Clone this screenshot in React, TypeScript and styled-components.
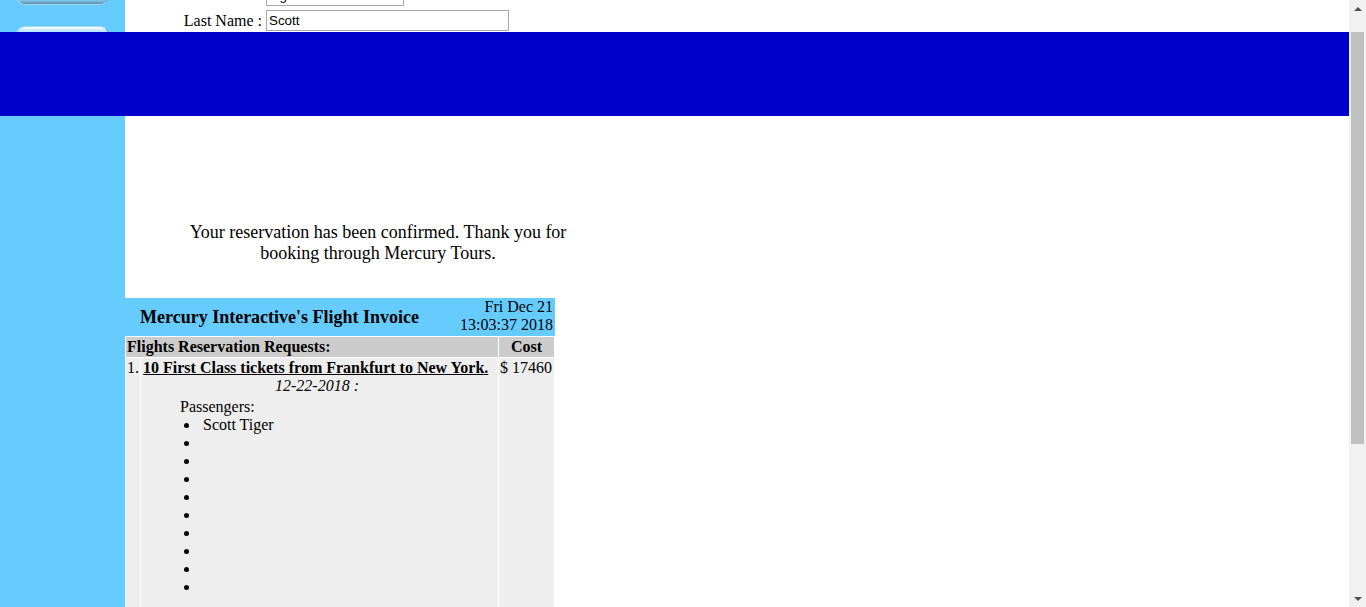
import React, { useLayoutEffect } from "react";
import styled, { createGlobalStyle } from "styled-components";

const GlobalStyle = createGlobalStyle`
  html, body { margin: 0; padding: 0; background: #ffffff; }
  body {
    font-family: "Liberation Serif", "Times New Roman", serif;
    font-size: 16px;
    color: #000000;
  }
`;

const Page = styled.div`
  display: flex;
  flex-direction: column;
  margin-right: 17px;
`;

const TopSection = styled.div`
  display: grid;
  grid-template-columns: 125px 1fr;
  height: 54px;
`;

const SideTop = styled.div`
  background: #66ccff;
  overflow: hidden;
  padding: 8px 0 0 16px;
  display: flex;
  flex-direction: column;
  gap: 21px;
`;

const NavButton = styled.div`
  width: 93px;
  height: 19px;
  flex: none;
  box-sizing: border-box;
  border-radius: 9px;
  border: 1px solid #a9d6ee;
  border-right-color: #7f98a8;
  background: linear-gradient(
    to bottom,
    #ffffff 0%,
    #cdeefc 15%,
    #9edcfa 45%,
    #86cdf2 75%,
    #5a8fb0 100%
  );
`;

const Form = styled.div`
  display: grid;
  grid-template-columns: 137px auto;
  column-gap: 4px;
  row-gap: 4px;
  padding-top: 7px;
  align-content: start;
  align-items: center;
`;

const Label = styled.div`
  text-align: right;
  line-height: 21px;
  white-space: nowrap;
`;

const Field = styled.input<{ $w: number }>`
  width: ${(p) => p.$w}px;
  height: 21px;
  box-sizing: border-box;
  border: 1px solid #a9a9a9;
  padding: 0 2px;
  margin: 0;
  font-family: "Liberation Sans", Arial, sans-serif;
  font-size: 13.33px;
  color: #000;
  background: #fff;
  justify-self: start;
  outline: none;
`;

const Band = styled.div`
  height: 84px;
  background: #0000cc;
`;

const BottomSection = styled.div`
  display: grid;
  grid-template-columns: 125px 1fr;
  min-height: 706px;
`;

const SideBottom = styled.div`
  background: #66ccff;
`;

const Main = styled.div`
  padding-top: 106px;
`;

const Confirm = styled.div`
  width: 400px;
  margin-left: 53px;
  text-align: center;
  font-size: 18px;
  line-height: 21px;
`;

const Invoice = styled.div`
  width: 430px;
  margin-top: 34px;
`;

const InvoiceHead = styled.div`
  display: flex;
  justify-content: space-between;
  align-items: center;
  height: 38px;
  box-sizing: border-box;
  padding: 0 2px 0 15px;
  background: #66ccff;
`;

const InvoiceTitle = styled.div`
  font-weight: bold;
  font-size: 18px;
`;

const InvoiceDate = styled.div`
  align-self: flex-start;
  text-align: right;
  line-height: 18px;
`;

const Grid = styled.div`
  display: grid;
  grid-template-columns: 14px 357px 55px;
  gap: 1px;
  padding: 1px;
  background: #ffffff;
`;

const HeadCell = styled.div<{ $span?: number; $center?: boolean }>`
  grid-column: span ${(p) => p.$span ?? 1};
  background: #cccccc;
  font-weight: bold;
  padding: 1px;
  line-height: 18px;
  text-align: ${(p) => (p.$center ? "center" : "left")};
  white-space: nowrap;
`;

const BodyCell = styled.div<{ $tall?: boolean }>`
  background: #eeeeee;
  padding: 1px 1px ${(p) => (p.$tall ? "40px" : "1px")} 1px;
  line-height: 18px;
  white-space: nowrap;
`;

const FlightTitle = styled.div`
  font-weight: bold;
  text-decoration: underline;
  padding-left: 1px;
`;

const DateLine = styled.div`
  text-align: center;
  font-style: italic;
  padding-right: 5px;
`;

const Passengers = styled.div`
  margin-top: 3px;
  padding-left: 38px;
`;

const List = styled.ul`
  margin: 0;
  padding: 0 0 0 4px;
  list-style: none;
`;

const Item = styled.li`
  display: flex;
  align-items: center;
  height: 18px;
  line-height: 18px;

  &::before {
    content: "";
    flex: none;
    width: 5px;
    height: 5px;
    border-radius: 50%;
    background: #000;
    margin-right: 14px;
  }
`;

const Scrollbar = styled.div`
  position: fixed;
  top: 0;
  right: 0;
  width: 17px;
  height: 100vh;
  background: #f1f1f1;
  display: flex;
  flex-direction: column;
`;

const ArrowBox = styled.div<{ $down?: boolean }>`
  height: 17px;
  flex: none;
  display: flex;
  align-items: center;
  justify-content: center;

  &::before {
    content: "";
    width: 0;
    height: 0;
    border-left: 4px solid transparent;
    border-right: 4px solid transparent;
    ${(p) =>
      p.$down
        ? "border-top: 4px solid #505050;"
        : "border-bottom: 4px solid #505050;"}
  }
`;

const Track = styled.div`
  flex: 1;
  padding: 15px 2px 0 2px;
`;

const Thumb = styled.div`
  height: 412px;
  background: #c1c1c1;
`;

const passengers = ["Scott Tiger", "", "", "", "", "", "", "", "", ""];

export default function App() {
  useLayoutEffect(() => {
    window.scrollTo(0, 22);
  }, []);

  return (
    <>
      <GlobalStyle />
      <Page>
        <TopSection>
          <SideTop>
            <NavButton />
            <NavButton />
          </SideTop>
          <Form>
            <Label />
            <Field $w={138} defaultValue="Tiger" readOnly />
            <Label>Last Name :</Label>
            <Field $w={243} defaultValue="Scott" readOnly />
          </Form>
        </TopSection>
        <Band />
        <BottomSection>
          <SideBottom />
          <Main>
            <Confirm>
              Your reservation has been confirmed. Thank you for booking through
              Mercury Tours.
            </Confirm>
            <Invoice>
              <InvoiceHead>
                <InvoiceTitle>Mercury Interactive's Flight Invoice</InvoiceTitle>
                <InvoiceDate>
                  Fri Dec 21
                  <br />
                  13:03:37 2018
                </InvoiceDate>
              </InvoiceHead>
              <Grid>
                <HeadCell $span={2}>Flights Reservation Requests:</HeadCell>
                <HeadCell $center>Cost</HeadCell>
                <BodyCell>1.</BodyCell>
                <BodyCell $tall>
                  <FlightTitle>
                    10 First Class tickets from Frankfurt to New York.
                  </FlightTitle>
                  <DateLine>12-22-2018 :</DateLine>
                  <Passengers>
                    Passengers:
                    <List>
                      {passengers.map((name, i) => (
                        <Item key={i}>{name}</Item>
                      ))}
                    </List>
                  </Passengers>
                </BodyCell>
                <BodyCell>$ 17460</BodyCell>
              </Grid>
            </Invoice>
          </Main>
        </BottomSection>
      </Page>
      <Scrollbar>
        <ArrowBox />
        <Track>
          <Thumb />
        </Track>
        <ArrowBox $down />
      </Scrollbar>
    </>
  );
}
